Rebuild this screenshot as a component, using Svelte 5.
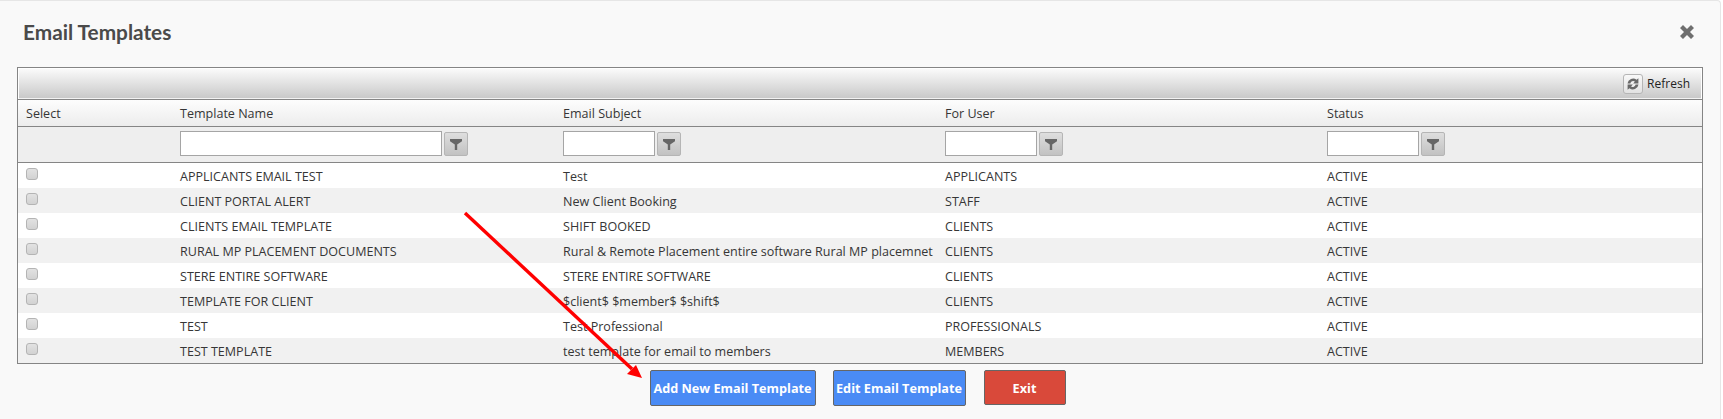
<script lang="ts">
	const columns = [
		{ title: 'Select' },
		{ title: 'Template Name', filter: 'wide' },
		{ title: 'Email Subject', filter: 'narrow' },
		{ title: 'For User', filter: 'narrow' },
		{ title: 'Status', filter: 'narrow' }
	];

	const rows = [
		['APPLICANTS EMAIL TEST', 'Test', 'APPLICANTS', 'ACTIVE'],
		['CLIENT PORTAL ALERT', 'New Client Booking', 'STAFF', 'ACTIVE'],
		['CLIENTS EMAIL TEMPLATE', 'SHIFT BOOKED', 'CLIENTS', 'ACTIVE'],
		['RURAL MP PLACEMENT DOCUMENTS', 'Rural & Remote Placement entire software Rural MP placemnet', 'CLIENTS', 'ACTIVE'],
		['STERE ENTIRE SOFTWARE', 'STERE ENTIRE SOFTWARE', 'CLIENTS', 'ACTIVE'],
		['TEMPLATE FOR CLIENT', '$client$ $member$ $shift$', 'CLIENTS', 'ACTIVE'],
		['TEST', 'Test Professional', 'PROFESSIONALS', 'ACTIVE'],
		['TEST TEMPLATE', 'test template for email to members', 'MEMBERS', 'ACTIVE']
	];
</script>

<div class="modal">
	<header class="modal-head">
		<h1>Email Templates</h1>
		<button class="close" aria-label="Close">
			<svg viewBox="0 0 14 14" width="14" height="14">
				<path d="M0 3 3 0 7 4 11 0 14 3 10 7 14 11 11 14 7 10 3 14 0 11 4 7Z" fill="#6f6f6f" />
			</svg>
		</button>
	</header>

	<div class="grid">
		<div class="toolbar">
			<button class="refresh-icon" aria-label="Refresh">
				<svg viewBox="0 0 14 14" width="14" height="14">
					<path d="M1.5 6.4A5.6 5.6 0 0 1 10.6 2.8L12.4 1.2V6.4H7.2L8.9 4.6A2.8 2.8 0 0 0 4.4 6.4Z" fill="#686868" />
					<path d="M12.5 7.6A5.6 5.6 0 0 1 3.4 11.2L1.6 12.8V7.6H6.8L5.1 9.4A2.8 2.8 0 0 0 9.6 7.6Z" fill="#686868" />
				</svg>
			</button>
			<span>Refresh</span>
		</div>
		<table>
			<colgroup>
				<col style="width:155px" />
				<col style="width:383px" />
				<col style="width:382px" />
				<col style="width:382px" />
				<col />
			</colgroup>
			<thead>
				<tr class="titles">
					{#each columns as col}
						<th>{col.title}</th>
					{/each}
				</tr>
				<tr class="filters">
					{#each columns as col}
						<td>
							{#if col.filter}
								<div class="filter">
									<input class={col.filter} type="text" />
									<button aria-label="Filter">
										<svg viewBox="0 0 14 14" width="14" height="14">
											<path d="M1 2H13V4.2L8.2 7.6V13H5.8V7.6L1 4.2Z" fill="#666" />
										</svg>
									</button>
								</div>
							{/if}
						</td>
					{/each}
				</tr>
			</thead>
			<tbody>
				{#each rows as row}
					<tr>
						<td class="check"><span class="box"></span></td>
						{#each row as cell}
							<td>{cell}</td>
						{/each}
					</tr>
				{/each}
			</tbody>
		</table>
	</div>

	<div class="actions">
		<button class="btn blue add">Add New Email Template</button>
		<button class="btn blue edit">Edit Email Template</button>
		<button class="btn red">Exit</button>
	</div>

	<!-- annotation arrow drawn on top of the screenshot -->
	<svg class="arrow" viewBox="0 0 1723 419" width="1723" height="419">
		<line x1="465" y1="213" x2="632" y2="369" stroke="#f00" stroke-width="3.4" />
		<path d="M642 378 627 374 636 365Z" fill="#f00" />
	</svg>
</div>

<style>
	:global(body) {
		margin: 0;
		background: #fff;
	}
	.modal {
		position: relative;
		box-sizing: border-box;
		width: 1721px;
		height: 419px;
		background: #f9f9f9;
		border-top: 1px solid #e6e6e6;
		border-right: 1px solid #e6e6e6;
		border-radius: 0 4px 0 0;
		font-family: 'Open Sans', sans-serif;
		font-size: 12.55px;
		color: #363636;
		overflow: hidden;
	}
	.modal-head {
		display: flex;
		align-items: center;
		justify-content: space-between;
		height: 66px;
		padding: 0 26px 5px 23px;
		box-sizing: border-box;
	}
	h1 {
		margin: 0;
		font-family: Lato, sans-serif;
		font-size: 20.8px;
		font-weight: 700;
		color: #4a4a4a;
	}
	.close {
		border: 0;
		padding: 0;
		background: none;
		display: flex;
	}
	.grid {
		margin-left: 17px;
		width: 1686px;
		box-sizing: border-box;
		border: 1px solid #858585;
		background: #fff;
	}
	.toolbar {
		display: flex;
		align-items: center;
		justify-content: flex-end;
		gap: 4px;
		height: 30px;
		margin: 1px 1px 0;
		padding-right: 11px;
		box-sizing: border-box;
		border-bottom: 1px solid #f2f2f2;
		background: linear-gradient(#fafafa, #c9c9c9);
		color: #222;
		font-size: 12px;
	}
	.refresh-icon {
		width: 20px;
		height: 20px;
		padding: 0;
		display: flex;
		align-items: center;
		justify-content: center;
		border: 1px solid #b5b5b5;
		border-radius: 3px;
		background: linear-gradient(#f8f8f8, #e2e2e2);
	}
	table {
		width: 100%;
		table-layout: fixed;
		border-collapse: separate;
		border-spacing: 0;
		border-top: 1px solid #858585;
	}
	th,
	td {
		box-sizing: border-box;
		padding: 1px 7px 0;
		white-space: nowrap;
	}
	th {
		height: 27px;
		text-align: left;
		font-weight: 400;
		background: linear-gradient(#fdfdfd, #ececec);
		border-bottom: 1px solid #858585;
	}
	th:first-child {
		padding-left: 8px;
	}
	.filters td {
		height: 36px;
		padding-top: 0;
		padding-bottom: 2px;
		background: #eee;
		border-bottom: 1px solid #858585;
	}
	.filter {
		display: flex;
		align-items: center;
		gap: 2px;
	}
	.filter input {
		box-sizing: border-box;
		height: 25px;
		padding: 0 4px;
		border: 1px solid #a5a5a5;
		background: #fff;
	}
	.filter input.wide {
		width: 262px;
	}
	.filter input.narrow {
		width: 92px;
	}
	.filter button {
		width: 24px;
		height: 24px;
		padding: 0;
		display: flex;
		align-items: center;
		justify-content: center;
		border: 1px solid #b5b5b5;
		border-radius: 2px;
		background: linear-gradient(#dedede, #c2c2c2);
	}
	tbody tr {
		height: 25px;
	}
	tbody tr:nth-child(even) {
		background: #f1f1f1;
	}
	.check {
		vertical-align: top;
		padding: 5px 8px 0;
		line-height: 0;
	}
	.box {
		display: inline-block;
		box-sizing: border-box;
		width: 12px;
		height: 12px;
		border: 1px solid #b4b4b4;
		border-radius: 3px;
		background: linear-gradient(#e2e2e2, #d2d2d2);
	}
	.actions {
		display: flex;
		justify-content: center;
		align-items: flex-start;
		gap: 17px;
		margin-top: 6px;
		padding-right: 5px;
	}
	.btn {
		height: 36px;
		padding: 0;
		box-sizing: border-box;
		border: 1px solid #666;
		border-radius: 2px;
		font-family: 'Open Sans', sans-serif;
		font-size: 12.7px;
		font-weight: 700;
		color: #fff;
	}
	.blue {
		background: #4a8bf5;
	}
	.add {
		width: 166px;
	}
	.edit {
		width: 133px;
	}
	.red {
		width: 82px;
		height: 35px;
		margin-left: 1px;
		background: #d9493a;
	}
	.arrow {
		position: absolute;
		top: -1px;
		left: 0;
		pointer-events: none;
	}
</style>
